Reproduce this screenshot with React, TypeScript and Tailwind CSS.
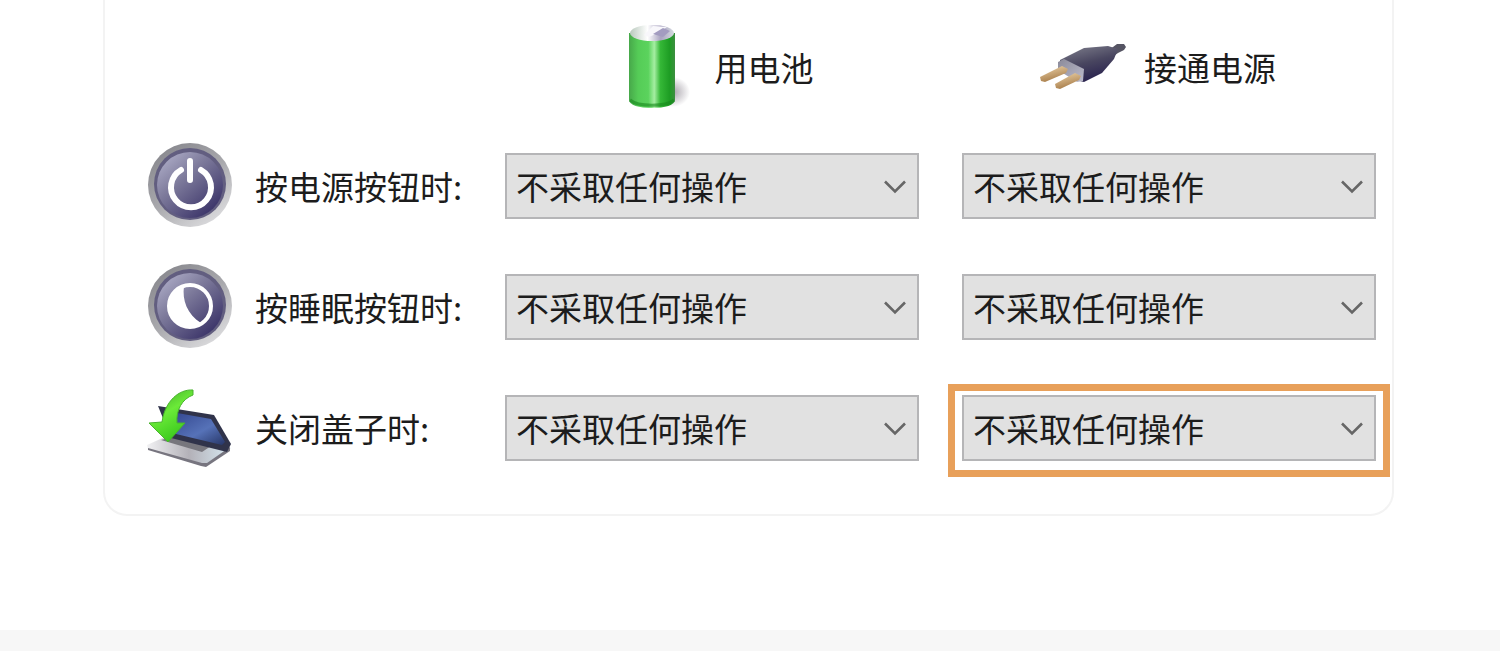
import { useId, type ReactNode } from "react";

const ACTIONS = ["不采取任何操作", "睡眠", "休眠", "关机"];

/* ─────────────────────────────────────────────────────────────
   Icons
   ───────────────────────────────────────────────────────────── */
function BatteryIcon() {
  return (
    <svg viewBox="0 0 64 90" className="h-[90px] w-16 shrink-0" aria-hidden="true">
      <defs>
        <linearGradient id="bat-body">
          <stop offset="0" stopColor="#47a84a" />
          <stop offset="0.2" stopColor="#55cc57" />
          <stop offset="0.42" stopColor="#5bd35d" />
          <stop offset="0.55" stopColor="#a5eea2" />
          <stop offset="0.68" stopColor="#35b837" />
          <stop offset="0.88" stopColor="#1e9d24" />
          <stop offset="1" stopColor="#3d8f40" />
        </linearGradient>
        <linearGradient id="bat-top">
          <stop offset="0" stopColor="#b9c9bd" />
          <stop offset="0.4" stopColor="#ffffff" />
          <stop offset="0.7" stopColor="#a9a3c0" />
          <stop offset="1" stopColor="#d5dbe0" />
        </linearGradient>
        <radialGradient id="bat-shadow">
          <stop offset="0" stopColor="#8d8791" stopOpacity="0.75" />
          <stop offset="1" stopColor="#8d8791" stopOpacity="0" />
        </radialGradient>
      </defs>
      <ellipse cx="46" cy="70" rx="17" ry="15" fill="url(#bat-shadow)" />
      <path d="M2 11V78C2 83 12 86 25 86S48 83 48 78V11Z" fill="url(#bat-body)" />
      <path d="M3 78C11 85 39 85 47 78" fill="none" stroke="#15871b" strokeWidth="3" opacity="0.6" />
      <ellipse cx="25" cy="11" rx="22" ry="8" fill="url(#bat-top)" />
      <path d="M17 13 26 4 40 5 31 11 22 15Z" fill="#f8f7fb" />
      <path d="M26 12 36 6 43 9 36 15Z" fill="#a39cc0" />
    </svg>
  );
}

function PlugIcon() {
  return (
    <svg viewBox="0 0 90 52" className="h-[52px] w-[90px] shrink-0" aria-hidden="true">
      <defs>
        <linearGradient id="plug-body" x1="0.3" y1="0" x2="0.7" y2="1">
          <stop offset="0" stopColor="#777786" />
          <stop offset="0.45" stopColor="#494660" />
          <stop offset="1" stopColor="#241c4c" />
        </linearGradient>
        <linearGradient id="plug-face" x1="0" y1="0" x2="1" y2="1">
          <stop offset="0" stopColor="#8a8998" />
          <stop offset="1" stopColor="#bdbccd" />
        </linearGradient>
        <linearGradient id="plug-pin" x1="0" y1="0" x2="0.4" y2="1">
          <stop offset="0" stopColor="#f0d7ad" />
          <stop offset="1" stopColor="#a77c49" />
        </linearGradient>
      </defs>
      <path d="M71 9 79 3 86 3 88 6 86 9 80 12 73 17Z" fill="#555463" />
      <path d="M22 19 46 7 70 5 80 8 76 18 64 32 46 41 38 39 22 29Z" fill="url(#plug-body)" />
      <path d="M20 21 26 18 46 28 45 40 39 41 20 29Z" fill="url(#plug-face)" />
      <path d="M2 36 24 25 30 28 28 32 7 41 3 40Z" fill="url(#plug-pin)" />
      <path d="M17 43 37 32 43 35 41 39 22 48 18 47Z" fill="url(#plug-pin)" />
    </svg>
  );
}

function RoundButton({ name, children }: { name: string; children: ReactNode }) {
  const rim = `${name}-rim`;
  const face = `${name}-face`;
  return (
    <svg viewBox="0 0 86 86" className="size-[86px] shrink-0" aria-hidden="true">
      <defs>
        <linearGradient id={rim} x1="0.15" y1="0" x2="0.85" y2="1">
          <stop offset="0" stopColor="#85858b" />
          <stop offset="0.5" stopColor="#a9a9ad" />
          <stop offset="1" stopColor="#e2e2e4" />
        </linearGradient>
        <linearGradient id={face} x1="0.1" y1="0.1" x2="0.8" y2="0.9">
          <stop offset="0" stopColor="#aaa9c4" />
          <stop offset="0.4" stopColor="#7d7a9b" />
          <stop offset="1" stopColor="#3e376b" />
        </linearGradient>
      </defs>
      <circle cx="43" cy="42" r="42" fill={`url(#${rim})`} />
      <circle cx="43" cy="41" r="36" fill="#625e80" />
      <circle cx="43" cy="42" r="33" fill={`url(#${face})`} />
      {children}
    </svg>
  );
}

function PowerIcon() {
  return (
    <RoundButton name="power">
      <path
        d="M34 27A20 20 0 1 0 54 27M43 18V37"
        fill="none"
        stroke="#fff"
        strokeWidth="6"
        strokeLinecap="round"
      />
    </RoundButton>
  );
}

function SleepIcon() {
  return (
    <RoundButton name="sleep">
      <circle cx="43" cy="42" r="21" fill="none" stroke="#fff" strokeWidth="4" />
      <path d="M36 22C20 27 17 50 33 61C41 65 50 64 54 59C40 50 35 36 37 22Z" fill="#fff" />
    </RoundButton>
  );
}

function LidIcon() {
  return (
    <svg viewBox="0 0 86 86" className="size-[86px] shrink-0" aria-hidden="true">
      <defs>
        <linearGradient id="lid-screen" x1="0" y1="0" x2="1" y2="1">
          <stop offset="0" stopColor="#2d3f88" />
          <stop offset="0.6" stopColor="#5672b8" />
          <stop offset="1" stopColor="#263566" />
        </linearGradient>
        <linearGradient id="lid-arrow" x1="0" y1="0" x2="0.5" y2="1">
          <stop offset="0" stopColor="#3aa128" />
          <stop offset="0.5" stopColor="#6bea38" />
          <stop offset="1" stopColor="#39c91c" />
        </linearGradient>
        <linearGradient id="lid-base">
          <stop offset="0" stopColor="#f1f1f3" />
          <stop offset="0.5" stopColor="#b3b1b8" />
          <stop offset="1" stopColor="#d8eaf3" />
        </linearGradient>
      </defs>
      <path d="M0 60 20 51 84 63 59 80 54 80 1 64Z" fill="url(#lid-base)" />
      <path d="M1 63 55 78 60 78 83 62 83 66 59 82 54 81 1 65Z" fill="#77757f" />
      <path d="M14 55 28 51 64 61 55 67Z" fill="#77767d" />
      <path d="M11 21 67 30 84 59 80 67 24 53Z" fill="#30334a" />
      <path d="M19 26 64 34 78 57 75 60 29 49Z" fill="url(#lid-screen)" />
      <path
        d="M46 5C32 4 18 16 15 37L2 38 21 57 38 38 30 38C29 25 35 14 46 10Z"
        fill="url(#lid-arrow)"
        stroke="#48b32d"
      />
    </svg>
  );
}

/* ─────────────────────────────────────────────────────────────
   Form parts
   ───────────────────────────────────────────────────────────── */
function ActionSelect({
  id,
  labelledBy,
  highlighted = false,
}: {
  id?: string;
  labelledBy: string;
  highlighted?: boolean;
}) {
  return (
    <div className="relative">
      <select
        id={id}
        aria-labelledby={labelledBy}
        className="block h-[66px] w-full appearance-none border-2 border-[#b5b5b7] bg-[#e1e1e1] pr-12 pl-[9px]"
      >
        {ACTIONS.map((action) => (
          <option key={action}>{action}</option>
        ))}
      </select>
      <svg
        viewBox="0 0 24 16"
        className="pointer-events-none absolute top-[26px] right-3 h-4 w-6"
        fill="none"
        stroke="#666"
        strokeWidth="2.6"
        aria-hidden="true"
      >
        <path d="M2 2.5 12 12.5 22 2.5" />
      </svg>
      {highlighted && (
        <div className="pointer-events-none absolute -top-[11px] -right-3.5 -bottom-4 -left-3.5 border-[7px] border-[#e8a05a]" />
      )}
    </div>
  );
}

function SettingRow({
  icon,
  label,
  highlighted,
}: {
  icon: ReactNode;
  label: string;
  highlighted?: boolean;
}) {
  const id = useId();
  return (
    <>
      <div className="flex h-[86px] items-center gap-[22px]">
        {icon}
        <label id={`${id}-label`} htmlFor={`${id}-battery`} className="whitespace-nowrap">
          {label}
        </label>
      </div>
      <ActionSelect id={`${id}-battery`} labelledBy={`${id}-label col-battery`} />
      <ActionSelect labelledBy={`${id}-label col-plugged`} highlighted={highlighted} />
    </>
  );
}

export default function App() {
  return (
    <div className="bg-white font-['Noto_Sans_CJK_SC','Liberation_Sans',sans-serif] text-[33px] leading-[44px] text-[#1c1c1c]">
      <main className="pr-[106px] pb-[114px] pl-[103px]">
        <form className="rounded-b-3xl border-x-2 border-b-2 border-[#f3f3f3] pt-[22px] pr-4 pb-[43px] pl-[42px]">
          <div className="grid grid-cols-[315px_1fr_1fr] items-center gap-x-[43px]">
            <div />
            <div className="flex h-[90px] items-center justify-center gap-6 pl-4">
              <BatteryIcon />
              <span id="col-battery">用电池</span>
            </div>
            <div className="flex h-[90px] items-center justify-center gap-4 pr-6">
              <PlugIcon />
              <span id="col-plugged">接通电源</span>
            </div>
          </div>
          <div className="mt-[31px] grid grid-cols-[315px_1fr_1fr] items-center gap-x-[43px] gap-y-[35px]">
            <SettingRow icon={<PowerIcon />} label="按电源按钮时:" />
            <SettingRow icon={<SleepIcon />} label="按睡眠按钮时:" />
            <SettingRow icon={<LidIcon />} label="关闭盖子时:" highlighted />
          </div>
        </form>
      </main>
      <footer className="h-[21px] bg-[#f7f7f7]" />
    </div>
  );
}
